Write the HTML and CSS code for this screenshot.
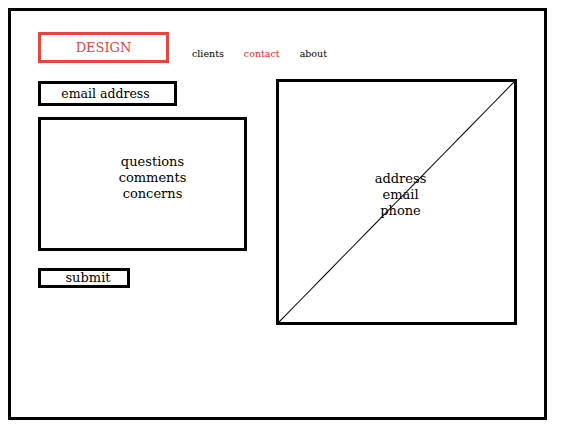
FILE: index.html
```html
<!DOCTYPE html>
<html lang="en">
<head>
  <meta charset="utf-8">
  <title>Contact</title>
  <link rel="stylesheet" href="styles.css">
</head>
<body>
  <div class="frame">
    <header class="top">
      <div class="logo">DESIGN</div>
      <nav class="nav">
        <a href="#">clients</a>
        <a href="#" class="active">contact</a>
        <a href="#">about</a>
      </nav>
    </header>

    <main class="content">
      <form class="form">
        <div class="field">email address</div>
        <div class="message">
          questions<br>
          comments<br>
          concerns
        </div>
        <div class="submit">submit</div>
      </form>

      <div class="info">
        address<br>
        email<br>
        phone
      </div>
    </main>
  </div>
</body>
</html>
```

FILE: styles.css
```css
body {
  font-family: "DejaVu Serif", "Liberation Serif", serif;
  color: #000;
  background: #fff;
  margin: 0;
  padding: 8px;
}
.frame {
  box-sizing: border-box;
  width: 539px;
  height: 412px;
  border: 3px solid #000;
  padding: 21px 0 0 27px;
}
.top {
  display: flex;
  align-items: flex-start;
}
.logo {
  box-sizing: border-box;
  width: 131px;
  height: 31px;
  border: 3px solid #e8433f;
  color: #e8433f;
  font-size: 13px;
  text-align: center;
  line-height: 25px;
}
.nav {
  display: flex;
  gap: 20px;
  margin: 16px 0 0 23px;
  font-size: 9.5px;
}
.nav a {
  color: #000;
  text-decoration: none;
}
.nav a.active {
  color: #e8262a;
}
.content {
  display: flex;
  gap: 29px;
  margin-top: 16px;
}
.form {
  display: flex;
  flex-direction: column;
  align-items: flex-start;
  width: 209px;
  margin: 2px 0 0;
}
.field {
  box-sizing: border-box;
  width: 139px;
  height: 25px;
  padding-right: 4px;
  border: 3px solid #000;
  font-size: 12.5px;
  line-height: 19px;
  text-align: center;
}
.message {
  box-sizing: border-box;
  width: 209px;
  height: 134px;
  margin-top: 11px;
  padding: 34px 0 0 20px;
  border: 3px solid #000;
  font-size: 13px;
  line-height: 16px;
  text-align: center;
}
.submit {
  box-sizing: border-box;
  width: 92px;
  height: 20px;
  margin-top: 17px;
  padding-left: 8px;
  border: 3px solid #000;
  font-size: 13px;
  line-height: 14px;
  text-align: center;
}
.info {
  box-sizing: border-box;
  width: 241px;
  height: 246px;
  padding: 89px 0 0 8px;
  border: 3px solid #000;
  font-size: 13px;
  line-height: 16px;
  text-align: center;
  background: linear-gradient(to bottom right, transparent calc(50% - 1px), #000 50%, transparent calc(50% + 1px));
}
```
